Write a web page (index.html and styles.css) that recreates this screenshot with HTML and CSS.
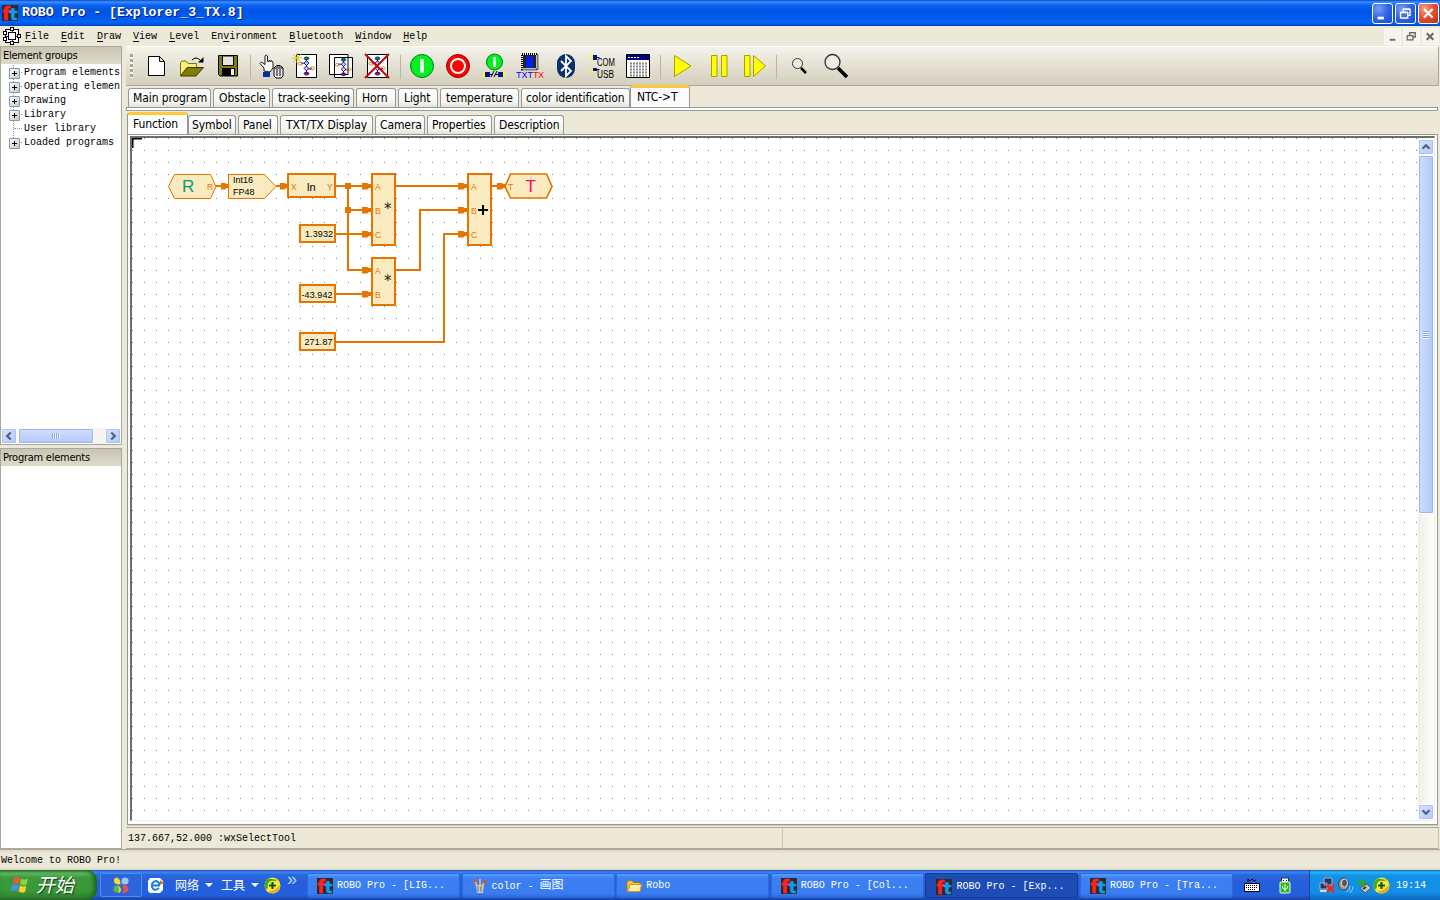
FILE: index.html
```
<!DOCTYPE html>
<html lang="en">
<head>
<meta charset="utf-8">
<title>ROBO Pro</title>
<link rel="stylesheet" href="styles.css">
</head>
<body>
<svg class="defs" width="0" height="0">
  <symbol id="ft" viewBox="0 0 16 16">
    <rect width="16" height="16" fill="#2b2b2b"/>
    <text x=".5" y="14.500" font-family="DejaVu Sans" font-weight="bold" font-size="17" fill="#ff2222" stroke="#ff2222" stroke-width=".6">f</text>
    <text x="8" y="14.500" font-family="DejaVu Sans" font-weight="bold" font-size="15.500" fill="#0c9cf0" stroke="#0c9cf0" stroke-width=".6">t</text>
  </symbol>
  <symbol id="chart" viewBox="0 0 20 22">
    <path d="M10 2V20M4 8H10M10 14H16" stroke="#0000a0" fill="none"/>
    <ellipse cx="10" cy="3" rx="2.5" ry="1.5" fill="#187868" stroke="#004040"/>
    <ellipse cx="3.5" cy="8.500" rx="2.500" ry="1.500" fill="none" stroke="#e87a10"/>
    <ellipse cx="16" cy="13.500" rx="2.500" ry="1.500" fill="none" stroke="#e87a10"/>
    <path d="M10 5.500L12.500 8L10 10.500L7.500 8ZM10 11L12.500 13.500L10 16L7.500 13.500Z" fill="#c8ccff" stroke="#0000a0"/>
    <ellipse cx="10" cy="19" rx="2.500" ry="1.500" fill="#c01020" stroke="#300080"/>
  </symbol>
  <symbol id="arrow" viewBox="0 0 10 8" preserveAspectRatio="none">
    <path d="M0 1H5L7 2H10V6H7L5 7.500H0Z" fill="#e67500"/>
  </symbol>
  <symbol id="shield" viewBox="0 0 17 17">
    <circle cx="8.500" cy="8.500" r="8" fill="#f7e62c"/>
    <path d="M2 13A8 8 0 0 1 5 1.500Q11 3 14 2.500Q6 6 2 13Z" fill="#3aa82a"/>
    <path d="M4 15Q12 13 16 8Q16 16 9 16.500Z" fill="#e8a820"/>
    <circle cx="8.500" cy="8.500" r="4.800" fill="#ffec40"/>
    <path d="M8.500 5V12M5 8.500H12" stroke="#20500a" stroke-width="2.200"/>
  </symbol>
</svg>

<header class="titlebar">
  <svg class="app-icon" width="16" height="16"><use href="#ft"/></svg>
  <span class="title">ROBO Pro - [Explorer_3_TX.8]</span>
  <div class="winbtns">
    <span class="winbtn"><svg viewBox="0 0 21 21"><path d="M5 15.500H12" stroke="#fff" stroke-width="3"/></svg></span>
    <span class="winbtn"><svg viewBox="0 0 21 21"><path d="M5 9.500H13V15.500H5ZM8 9V6H15.500V12.500H13M5 9H13M8 5.500H15.500" stroke="#fff" stroke-width="1.500" fill="none"/></svg></span>
    <span class="winbtn close"><svg viewBox="0 0 21 21"><path d="M5.500 5.500L15 15M15 5.500L5.500 15" stroke="#fff" stroke-width="2.300"/></svg></span>
  </div>
</header>

<nav class="menubar">
  <svg class="doc-icon" width="18" height="18" viewBox="0 0 18 18" shape-rendering="crispEdges">
    <path d="M2.500 2.500H15.500V15.500H2.500Z" fill="#fff" stroke="#000"/>
    <path d="M5.500 5.500H12.500V12.500H5.500Z" fill="#fff" stroke="#000"/>
    <path d="M9 3V6M9 12V15" stroke="#c00000"/><path d="M3 9H6M12 9H15" stroke="#0000c0"/>
    <path d="M7.500 .5H10.500V3.500H7.500ZM7.500 14.500H10.500V17H7.500ZM.5 4.500H3.500V7.500H.5ZM.5 10.500H3.500V13.500H.5ZM14.500 7.500H17V10.500H14.500Z" fill="#fff" stroke="#000"/>
  </svg>
  <span><u>F</u>ile</span><span><u>E</u>dit</span><span><u>D</u>raw</span><span><u>V</u>iew</span><span><u>L</u>evel</span><span>En<u>v</u>ironment</span><span><u>B</u>luetooth</span><span><u>W</u>indow</span><span><u>H</u>elp</span>
  <div class="mdibtns">
    <span><svg viewBox="0 0 16 16"><path d="M5 11.500H11" stroke="#6b6a60" stroke-width="2"/></svg></span>
    <span><svg viewBox="0 0 16 16"><path d="M3.500 7H9.500V11.500H3.500ZM6 6.500V4H12V8.500H10" stroke="#6b6a60" stroke-width="1.400" fill="none"/></svg></span>
    <span><svg viewBox="0 0 16 16"><path d="M4 4.500L11 11.500M11 4.500L4 11.500" stroke="#6b6a60" stroke-width="2.200"/></svg></span>
  </div>
</nav>

<main class="workspace">
  <aside class="side">
    <section class="panel groups">
      <h2>Element groups</h2>
      <ul class="tree">
        <li><i class="plus"></i>Program elements</li>
        <li><i class="plus"></i>Operating elemen</li>
        <li><i class="plus"></i>Drawing</li>
        <li><i class="plus"></i>Library</li>
        <li><i class="leaf"></i>User library</li>
        <li><i class="plus"></i>Loaded programs</li>
      </ul>
      <div class="hscroll">
        <span class="sbtn"><svg viewBox="0 0 16 16"><path d="M10 4L6 8L10 12" stroke="#4d6185" stroke-width="2.600" fill="none"/></svg></span>
        <span class="thumb"><b></b></span>
        <span class="sbtn end"><svg viewBox="0 0 16 16"><path d="M6 4L10 8L6 12" stroke="#4d6185" stroke-width="2.600" fill="none"/></svg></span>
      </div>
    </section>
    <section class="panel elements"><h2>Program elements</h2></section>
  </aside>

  <div class="content">
    <div class="toolbar">
      <span class="grip"></span>
      <svg viewBox="138 46 36 40"><path d="M148.500 56.500H159.500L164.500 61.500V75.500H148.500ZM159.500 56.500V61.500H164.500" fill="#fff" stroke="#000"/></svg>
      <svg viewBox="174 46 36 40"><path d="M180.500 75V62.500L182 61H186L188 63.500H196.500V67" fill="#f8ee78" stroke="#77760a"/><path d="M180.500 76L187 67.500H203.500L196 76Z" fill="#807c08" stroke="#3c3a00"/><path d="M192 60Q196 56 200 60" fill="none" stroke="#000"/><path d="M203.500 57V62.500H198Z"/></svg>
      <svg viewBox="210 46 36 40"><path d="M218.500 55.500H237.500V76H220L218.500 74.500Z" fill="#807c08" stroke="#000"/><path d="M222.500 56H233.500V65.500H222.500Z" fill="#e8e6da" stroke="#000"/><path d="M222 68H235V76H222Z" fill="#000"/><path d="M231 69H234V75H231Z" fill="#eee"/></svg>
      <i class="sep narrow"></i>
      <svg viewBox="252 46 36 40"><path d="M264 71V68L260 63.500L261.500 62L265 64.500V56Q266 54 267.500 56V61.500H269V60.500L271 61.500V60.500L273 62V68L270 72Z" fill="#fff" stroke="#000" stroke-width=".9"/><path d="M263 72H270V77H263Z" fill="#0030a0"/><path d="M274 68V76L276 78H281L283 76V68L281 66H276Z" fill="#eee" stroke="#000"/><path d="M274 68H283M277 69V76M280 69V76M277 65.500H280" stroke="#000"/></svg>
      <svg viewBox="288 46 36 40"><path d="M296.500 54.500H316.500V77.500H296.500Z" fill="#fff" stroke="#000"/><use href="#chart" x="297" y="55" width="19" height="22"/><path d="M297 53V63M292 58H302M293.500 54.500L300.500 61.500M300.500 54.500L293.500 61.500" stroke="#c8c020"/></svg>
      <svg viewBox="324 46 36 40"><path d="M329.500 54.500H348V74.500H329.500ZM334.500 57.500H352.500V77.500H334.500Z" fill="#fff" stroke="#000"/><use href="#chart" x="334" y="57" width="19" height="20"/></svg>
      <svg viewBox="360 46 36 40"><path d="M367.500 54.500H387.500V77.500H367.500Z" fill="#fff" stroke="#000"/><use href="#chart" x="368" y="55" width="19" height="22"/><path d="M365 54L389 78M389 54L365 78" stroke="#c80808" stroke-width="2"/></svg>
      <i class="sep"></i>
      <svg viewBox="404 46 36 40"><circle cx="422" cy="66" r="11.500" fill="#00f020" stroke="#008010"/><path d="M422 59V73" stroke="#fff" stroke-width="3.500"/></svg>
      <svg viewBox="440 46 36 40"><circle cx="458" cy="66" r="11.500" fill="#f00" stroke="#900"/><circle cx="458" cy="66" r="7" fill="#f00" stroke="#fff" stroke-width="2"/></svg>
      <svg viewBox="476 46 36 40"><circle cx="494.500" cy="62" r="8" fill="#00f020" stroke="#008010"/><path d="M494.500 57V67" stroke="#fff" stroke-width="2.500"/><path d="M483 72H485V77H483ZM503 72H505V77H503Z" fill="#ff0"/><path d="M485 72H490V77H485ZM498 72H503V77H498Z" fill="#0010a0"/><path d="M489 74.500H493M495 74.500H499M491 77L494 71M494 77L497 71" stroke="#000"/></svg>
      <svg viewBox="512 46 36 40"><path d="M522 54H537.500V69.500H522Z" fill="#fff" stroke="#000" stroke-width="2" stroke-dasharray="1 1"/><path d="M523 55H536V68H523Z" fill="#222"/><path d="M526 56H533V68H526Z" fill="#0020f0"/><text x="516" y="78" class="tx" fill="#00f" textLength="17">TXT</text><text x="533" y="78" class="tx" fill="#f00" textLength="11">TX</text></svg>
      <svg viewBox="548 46 36 40"><rect x="557" y="54" width="18" height="24" rx="9" fill="#0b316c"/><path d="M561 61L571 71L566 76V56L571 61L561 71" fill="none" stroke="#fff" stroke-width="1.800"/></svg>
      <svg viewBox="584 46 36 40"><path d="M591 55H594V60H591ZM591 68H594V72H591Z" fill="#ff0"/><path d="M593 55H597V60H593ZM593 68H597V71H593Z" fill="#0010a0"/><path d="M597 57.500H599.500M597 69.500H599.500" fill="none" stroke="#0010a0"/><text x="597" y="66" class="com" textLength="18" lengthAdjust="spacingAndGlyphs">COM</text><text x="597" y="78" class="com" textLength="17" lengthAdjust="spacingAndGlyphs">USB</text></svg>
      <svg viewBox="620 46 36 40"><path d="M626.500 54.500H649.500V77.500H626.500Z" fill="#fff" stroke="#000"/><path d="M627 55H649V60H627Z" fill="#000080"/><path d="M628 57.500H639" stroke="#fff" stroke-dasharray="2 1"/><path d="M630 63.500H647M630 66.500H647M630 69.500H647M630 72.500H647M630 75.500H647" stroke="#888" stroke-width="2" stroke-dasharray="2 1"/></svg>
      <i class="sep"></i>
      <svg viewBox="664 46 36 40"><path d="M674.500 55.500L691 66L674.500 76.500Z" fill="#ff0" stroke="#a8a000"/></svg>
      <svg viewBox="700 46 36 40"><path d="M711.500 55.500H717V76.500H711.500ZM721.500 55.500H727V76.500H721.500Z" fill="#ff0" stroke="#a8a000"/></svg>
      <svg viewBox="736 46 36 40"><path d="M744.500 55.500H750V76.500H744.500ZM753.500 55.500L765.500 66L753.500 76.500Z" fill="#ff0" stroke="#a8a000"/></svg>
      <i class="sep wide"></i>
      <svg viewBox="781 46 36 40"><circle cx="797.500" cy="63.500" r="5" fill="#eeece4" stroke="#333"/><path d="M801 68L806 73" stroke="#000" stroke-width="2.500"/></svg>
      <svg viewBox="817 46 36 40"><circle cx="832.500" cy="62" r="7.500" fill="#eeece4" stroke="#333" stroke-width="1.300"/><path d="M838 68L847 77" stroke="#000" stroke-width="3.500"/></svg>
    </div>

    <div class="tabs first">
      <span class="tab t1">Main program</span><span class="tab t2">Obstacle</span><span class="tab t3">track-seeking</span><span class="tab t4">Horn</span><span class="tab t5">Light</span><span class="tab t6">temperature</span><span class="tab t7">color identification</span><span class="tab t8 on">NTC-&gt;T</span>
    </div>
    <div class="strip"></div>
    <div class="tabs second">
      <span class="tab s1 on">Function</span><span class="tab s2">Symbol</span><span class="tab s3">Panel</span><span class="tab s4">TXT/TX Display</span><span class="tab s5">Camera</span><span class="tab s6">Properties</span><span class="tab s7">Description</span>
    </div>

    <div class="page">
      <div class="view">
        <svg class="diagram" viewBox="132 138 1286 682" width="1286" height="682">
          <defs><pattern id="dots" x="0" y="6" width="12" height="12" patternUnits="userSpaceOnUse"><rect width="1" height="1" fill="#808080"/></pattern></defs>
          <rect x="132" y="138" width="1286" height="682" fill="url(#dots)"/>
          <path d="M132 148V138H142" fill="none" stroke="#000" stroke-width="3"/>
          <g fill="none" stroke="#e67500" stroke-width="2" shape-rendering="crispEdges">
            <path d="M216 186H222M276 186H282M336 186H372M336 234H372M336 294H372M348 186V270H372M348 210H372"/>
            <path d="M396 186H468M396 270H420V210H468M336 342H444V234H468M492 186H500"/>
          </g>
          <g fill="#e67500"><rect x="345" y="183" width="6" height="6"/><rect x="345" y="207" width="6" height="6"/></g>
          <g>
            <use href="#arrow" x="221" y="182" width="8" height="8"/>
            <use href="#arrow" x="280" y="182" width="9" height="8"/>
            <use href="#arrow" x="362" y="182" width="10" height="8"/><use href="#arrow" x="362" y="206" width="10" height="8"/><use href="#arrow" x="362" y="230" width="10" height="8"/><use href="#arrow" x="362" y="266" width="10" height="8"/><use href="#arrow" x="362" y="290" width="10" height="8"/>
            <use href="#arrow" x="458" y="182" width="10" height="8"/><use href="#arrow" x="458" y="206" width="10" height="8"/><use href="#arrow" x="458" y="230" width="10" height="8"/>
            <use href="#arrow" x="497" y="182" width="9" height="8"/>
          </g>
          <g fill="#f9ebbf" stroke="#e67500">
            <path d="M168.500 186.500L174.500 174.500H210.500L216 186.500L210.500 198.500H174.500Z"/>
            <path d="M228.500 174.500H264.500L276 186.500L264.500 198.500H228.500Z"/>
            <path d="M505 186.500L510.500 174H546.500L552 186.500L546.500 198H510.500Z" stroke-width="1.700"/>
            <g stroke-width="2">
              <rect x="288" y="174" width="47" height="23"/>
              <rect x="372" y="174" width="23" height="71"/>
              <rect x="372" y="258" width="23" height="47"/>
              <rect x="468" y="174" width="23" height="71"/>
              <rect x="300" y="225" width="35" height="17"/>
              <rect x="300" y="285" width="35" height="17"/>
              <rect x="300" y="333" width="35" height="17"/>
            </g>
          </g>
          <g class="port">
            <text x="207" y="190">R</text><text x="291" y="190">X</text><text x="327" y="190">Y</text>
            <text x="375" y="190">A</text><text x="375" y="214">B</text><text x="375" y="238">C</text>
            <text x="375" y="274">A</text><text x="375" y="298">B</text>
            <text x="471" y="190">A</text><text x="471" y="214">B</text><text x="471" y="238">C</text>
            <text x="508" y="190">T</text>
          </g>
          <text class="big" x="182" y="192" fill="#0a9a70">R</text>
          <text class="big" x="525.500" y="192" fill="#ff0a6c">T</text>
          <g class="val">
            <text x="233" y="183">Int16</text><text x="233" y="195">FP48</text>
            <text x="307" y="191" class="fn">ln</text>
            <text x="305" y="237" textLength="28">1.3932</text>
            <text x="301.500" y="298" textLength="31">-43.942</text>
            <text x="304.500" y="345" textLength="28">271.87</text>
          </g>
          <text class="star" x="384" y="214">*</text><text class="star" x="384" y="286">*</text>
          <path d="M478 210H488M483 205V215" stroke="#000" stroke-width="2"/>
        </svg>
        <div class="vscroll">
          <span class="sbtn"><svg viewBox="0 0 16 16"><path d="M4 10L8 6L12 10" stroke="#4d6185" stroke-width="2.600" fill="none"/></svg></span>
          <span class="thumb"><b></b></span>
          <span class="sbtn end"><svg viewBox="0 0 16 16"><path d="M4 6L8 10L12 6" stroke="#4d6185" stroke-width="2.600" fill="none"/></svg></span>
        </div>
      </div>
    </div>
    <div class="coords"><span>137.667,52.000 :wxSelectTool</span><span></span></div>
  </div>
</main>

<div class="statusbar">Welcome to ROBO Pro!</div>

<footer class="taskbar">
  <div class="start">
    <svg width="20" height="20" viewBox="0 0 20 20"><path d="M4 3Q7 1 10 3L9 9Q6 7 2.500 9Z" fill="#f0582a"/><path d="M11 3.500Q14 5.500 18 3.500L16.500 9.500Q13 11 10 9Z" fill="#8cd43c"/><path d="M2.300 10Q6 8.500 8.800 10.300L7.500 16Q5 14.500 1 16Z" fill="#4a90f4"/><path d="M10 10.300Q13 12.500 16.300 10.800L15 17Q12 18.500 8.700 16.500Z" fill="#fcd430"/></svg>
    <span>开始</span>
  </div>
  <div class="quick"><svg width="18" height="18" viewBox="0 0 18 18"><path d="M8.500 8.500Q1 9 2 3Q5 0 7 3Q9 5 8.500 8.500Z" fill="#f4dc28"/><circle cx="13" cy="5" r="3.600" fill="#9cc8f8"/><circle cx="5" cy="13" r="3.600" fill="#58b848"/><path d="M5 9.500Q8 10 9 13Q9 17 6 17Q9 13 5 9.500Z" fill="#f4dc28"/><path d="M9.500 9.500Q17 8 16.500 14Q14 18 10 16.500Q14 13 9.500 9.500Z" fill="#f05040"/></svg></div>
  <div class="links">
    <svg width="17" height="17" viewBox="0 0 17 17"><path d="M3 1H13L16 4V13L13 16H3L1 14V4Z" fill="#fff"/><path d="M12 11Q7 15 5 10Q4 5 9 4Q13 5 12 8.500H5" fill="none" stroke="#1480d8" stroke-width="2"/><path d="M13 3L17 6L13 8Z" fill="#e86818"/></svg>
    <span class="l1">网络</span><i></i><span class="l2">工具</span><i></i>
    <svg width="17" height="17"><use href="#shield"/></svg>
    <em>»</em>
  </div>
  <div class="tasks">
    <div class="task"><svg width="16" height="16"><use href="#ft"/></svg>ROBO Pro - [LIG...</div>
    <div class="task"><svg width="16" height="16" viewBox="0 0 16 16"><path d="M5 8L2 1M8 8V1M10 8L14 2" stroke="#e0a868" stroke-width="2"/><path d="M2 1L3 4M14 2L12 5" stroke="#e03c20" stroke-width="2"/><path d="M4 7H12L11 15H5Z" fill="#c8ccc8"/><path d="M6 8V14M9 8V14" stroke="#70785c"/></svg><span>color - <span class="cjk">画图</span></span></div>
    <div class="task"><svg width="16" height="16" viewBox="0 0 16 16"><path d="M1 4L2.500 2.500H6L7.500 4.500H14V13.500H1Z" fill="#f0c850" stroke="#a87818"/><path d="M2 13.500L4 6.500H15.500L14 13.500Z" fill="#fff09c" stroke="#c89830"/></svg>Robo</div>
    <div class="task"><svg width="16" height="16"><use href="#ft"/></svg>ROBO Pro - [Col...</div>
    <div class="task active"><svg width="16" height="16"><use href="#ft"/></svg>ROBO Pro - [Exp...</div>
    <div class="task"><svg width="16" height="16"><use href="#ft"/></svg>ROBO Pro - [Tra...</div>
  </div>
  <div class="devices">
    <svg width="16" height="16" viewBox="0 0 16 16"><path d="M4 5V2L6 4L8 2L10 4L12 3" stroke="#000" fill="none"/><path d="M.5 6.500H15.500V14.500H.5Z" fill="#fff" stroke="#000"/><path d="M2 8.500H14M2 10.500H14M4 12.500H12" stroke="#000" stroke-dasharray="1 1"/></svg>
    <svg width="12" height="17" viewBox="0 0 12 17"><path d="M2.500 1H9.500V6H2.500Z" fill="#fff" stroke="#333"/><path d="M4 3H5V4H4ZM7 3H8V4H7Z"/><rect x="1" y="5" width="10" height="11" rx="1" fill="#34b81c" stroke="#dfe"/><path d="M6 14V7M3.500 9V11L6 12.500L8.500 11V9" stroke="#fff" fill="none"/></svg>
  </div>
  <div class="tray">
    <svg width="17" height="17" viewBox="0 0 17 17"><path d="M5 1H13V8H5ZM1 6H8V12H1Z" fill="#283464" stroke="#a8b0c8"/><path d="M1 14H9" stroke="#d8dce8" stroke-width="2"/><path d="M8 8L15 15M15 8L8 15" stroke="#f02820" stroke-width="2.500"/></svg>
    <svg width="17" height="17" viewBox="0 0 17 17"><ellipse cx="6.500" cy="7" rx="5" ry="6" fill="#999" stroke="#444"/><ellipse cx="7.500" cy="6" rx="3" ry="4" fill="#555" stroke="#ddd"/><path d="M10 15Q13 13 13 9M13 16Q16 13 16 9" stroke="#9cccff" fill="none"/></svg>
    <svg width="17" height="17" viewBox="0 0 17 17"><path d="M2 5L5 1L6 3L12 4L9 9L5 8Z" fill="#28a838"/><path d="M5 11L12 7L16 11L10 16Z" fill="#c0c4c0" stroke="#555"/><path d="M8 12L11 10" stroke="#333" stroke-width="2"/></svg>
    <svg width="17" height="17"><use href="#shield"/></svg>
    <time>19:14</time>
  </div>
</footer>
</body>
</html>
```
FILE: styles.css
```
* { box-sizing: border-box; }
body {
  margin: 0; width: 1440px; height: 900px; overflow: hidden;
  display: grid; grid-template-rows: 26px 20px 803px 21px 30px;
  background: #ece9d8; color: #000;
  font: 10px/14px "Liberation Mono", "Noto Sans CJK SC", monospace;
  white-space: nowrap;
}
svg { display: block; flex: none; }
.defs { position: absolute; }

.titlebar {
  display: flex; align-items: center; padding: 0 1px 0 2px;
  background: linear-gradient(#0a48d0 0, #3a90ff 2px, #0a64f0 5px, #0054e3 10px, #0058ea 17px, #0066fa 22px, #0050d8 25px, #0040b0 26px);
}
.title {
  margin-left: 4px; flex: 1; color: #fff;
  font: bold 13.200px/20px "Liberation Mono", monospace;
  text-shadow: 1px 1px 0 #0a1883;
}
.winbtns { display: flex; gap: 2px; }
.winbtn {
  width: 21px; height: 21px; border: 1px solid #fff; border-radius: 3px;
  background: radial-gradient(circle at 30% 25%, #7a9cf4, #3064e4 50%, #1c4cd0);
}
.winbtn.close { background: radial-gradient(circle at 30% 25%, #f0a088, #e0502c 50%, #c03010); }

.menubar { display: flex; align-items: center; padding-left: 3px; gap: 12px; font-size: 10px; line-height: 16px; background: #ece9d8; }
.menubar > span { padding-top: 1px; }
.doc-icon { margin-right: -8px; }
.menubar u { text-decoration: underline; text-underline-offset: 2px; }
.mdibtns { margin-left: auto; display: flex; gap: 2px; padding-right: 1px; }
.mdibtns span { width: 17px; height: 17px; background: #f4f3ec; border: 1px solid #faf9f4; }

.workspace { display: grid; grid-template-columns: 122px 1fr; column-gap: 4px; min-height: 0; }
.side { display: grid; grid-template-rows: 399px 401px; row-gap: 3px; }
.panel { border: 1px solid #aca899; background: #fff; display: flex; flex-direction: column; overflow: hidden; }
.panel h2 {
  margin: 0; height: 17px; padding-left: 2px; flex: none;
  background: linear-gradient(#c8c5b4, #dedbcb);
  font: 11px/17px "DejaVu Sans Condensed", "DejaVu Sans", sans-serif; letter-spacing: -.25px;
}
.tree { list-style: none; margin: 0; padding: 1px 0 0 7px; flex: 1; overflow: hidden; }
.tree li { height: 14px; line-height: 15px; display: flex; align-items: center; }
.tree i { width: 16px; height: 14px; flex: none; background: repeating-linear-gradient(#999 0 1px, transparent 1px 2px) 5px 0 / 1px 100% no-repeat; position: relative; }
.tree i::after { content: ""; position: absolute; left: 6px; top: 7px; width: 8px; border-top: 1px dotted #999; }
.tree .plus::before {
  content: ""; position: absolute; z-index: 1; left: 1px; top: 3px; width: 9px; height: 9px; border: 1px solid #7b9ab8; border-radius: 1px;
  background: linear-gradient(#000, #000) center / 5px 1px no-repeat, linear-gradient(#000, #000) center / 1px 5px no-repeat, linear-gradient(135deg, #fff, #ccc6b8);
}
.hscroll { height: 16px; display: flex; background: #f5f4ee; }
.sbtn, .thumb {
  border: 1px solid #fff; border-radius: 2px; box-shadow: inset 0 0 0 1px #adc2f4;
  background: linear-gradient(135deg, #d8e4ff, #b4c8f8); flex: none;
}
.sbtn { width: 16px; height: 16px; }
.sbtn svg { width: 14px; height: 14px; }
.hscroll .thumb { width: 76px; height: 16px; margin-left: 1px; display: grid; place-items: center; background: linear-gradient(#d0deff, #b4c8f8); box-shadow: inset 0 0 0 1px #9ab4ec; }
.hscroll .thumb b { width: 8px; height: 6px; background: repeating-linear-gradient(90deg, #8ca8e4 0 1px, #eef4fe 1px 2px); }
.hscroll .end { margin-left: auto; }

.content { display: grid; grid-template-rows: 40px 21px 4px 23px 691px 24px; min-width: 0; }
.toolbar {
  display: flex; border-bottom: 1px solid #aca899; border-right: 1px solid #aca899; border-top: 1px solid #fff;
  background: linear-gradient(#f4f3ec, #e4e1d2 50%, #d2cfbf); height: 40px; margin-right: 1px; overflow: hidden;
}
.toolbar svg { width: 36px; height: 40px; margin-top: -1px; }
.grip { width: 3px; height: 24px; margin: 7px 5px 0 4px; background: repeating-linear-gradient(#a8a595 0 3px, #f4f3ec 3px 5px); }
.sep { width: 8px; height: 24px; margin-top: 8px; flex: none; background: linear-gradient(#b8b5a4, #b8b5a4) 4px 0 / 1px 100% no-repeat; }
.sep.narrow { width: 6px; }
.sep.wide { width: 9px; }
.tx { font: 9px "Liberation Sans", sans-serif; }
.com { font: 10px "Liberation Sans", sans-serif; }

.tabs { display: flex; align-items: flex-end; font: 12px/19px "DejaVu Sans Condensed", "DejaVu Sans", sans-serif; letter-spacing: -.1px; }
.tab {
  height: 19px; margin-right: 2px; padding-left: 5px; flex: none;
  border: 1px solid #919b9c; border-bottom: 0; border-radius: 3px 3px 0 0;
  background: linear-gradient(#fff, #f6f5f0 70%, #e4e2d8);
}
.tab.on { height: 22px; padding-left: 6px; background: #fcfcfe; border-top: 3px solid #ffc73c; line-height: 18px; }
.first { padding-left: 2px; }
.t1 { width: 83px; padding-left: 4px; } .t2 { width: 57px; } .t3 { width: 82px; } .t4 { width: 40px; } .t5 { width: 40px; } .t6 { width: 79px; } .t7 { width: 109px; margin-right: 0; padding-left: 4px; } .t8 { width: 60px; }
.strip { margin-right: 2px; border: 1px solid #919b9c; background: #fff; }
.second { padding-left: 1px; }
.s1 { width: 61px; margin-right: 0; } .s2 { width: 48px; } .s3 { width: 40px; } .s4 { width: 93px; } .s5 { width: 50px; } .s6 { width: 65px; } .s7 { width: 70px; }
.second .on { padding-left: 5px; }
.s2 { padding-left: 3px; }
.s3, .s5, .s6, .s7 { padding-left: 4px; }
.s4 { letter-spacing: 0; }

.page { margin: 0 2px 0 1px; border: 1px solid #919b9c; background: #fcfcfe; padding: 1px 2px 3px; box-shadow: 0 1px 0 #d0cdbd; }
.view { display: flex; height: 685px; border: 2px solid #716f64; border-right: 1px solid #f1efe2; border-bottom: 1px solid #f1efe2; background: #fff; }
.diagram { width: 1286px; height: 682px; }
.port { font: 8.500px "Liberation Sans", sans-serif; fill: #e67500; }
.big { font: 17px "Liberation Sans", sans-serif; }
.val { font: 9px "Liberation Sans", sans-serif; }
.fn { font-size: 11px; }
.star { font: 15px "DejaVu Sans", sans-serif; fill: #222; }
.vscroll { width: 16px; display: flex; flex-direction: column; background: linear-gradient(90deg, #f0efe8, #fdfdfb); padding-top: 1px; }
.vscroll .thumb { width: 16px; height: 359px; display: grid; place-items: center; background: linear-gradient(90deg, #d0deff, #b4c8f8); box-shadow: inset 0 0 0 1px #9ab4ec; }
.vscroll .thumb b { width: 6px; height: 8px; background: repeating-linear-gradient(#8ca8e4 0 1px, #eef4fe 1px 2px); }
.vscroll .end { margin-top: auto; }

.coords { display: grid; grid-template-columns: 657px 1fr; margin: 2px 1px 0 0; border-top: 1px solid #aca899; border-bottom: 1px solid #aca899; line-height: 22px; }
.coords span { padding-left: 2px; border-right: 1px solid #c8c5b4; }
.statusbar { padding-left: 1px; line-height: 22px; border-top: 1px solid #aca899; background: linear-gradient(#dedbca, #ece9d8 4px, #ece9d8 17px, #d8d5c4); }

.taskbar {
  display: flex; height: 30px; color: #fff;
  background: linear-gradient(#1f4fc0 0, #3c86f0 2px, #2a66dc 5px, #245edb 14px, #2360de 25px, #1941a5 30px);
}
.start {
  width: 97px; display: flex; align-items: center; padding-left: 10px; gap: 6px; border-radius: 0 10px 10px 0;
  background: linear-gradient(#2f7a2f 0, #62b862 3px, #3c983c 8px, #389a38 20px, #2f7a2f 30px);
  box-shadow: inset -3px 0 4px #1c601c;
}
.start span { font: italic 19px/28px "Noto Sans CJK SC", sans-serif; text-shadow: 1px 1px 1px #103c10; margin-top: -3px; }
.quick { width: 42px; height: 24px; margin: 3px 0 0 3px; border: 1px solid #4f8cf0; border-radius: 2px; background: #2c64dc; display: grid; place-items: center; }
.links { width: 166px; display: flex; align-items: center; padding-left: 5px; font: 12px/28px "Noto Sans CJK SC", sans-serif; }
.links span { margin-left: 7px; }
.links .l1 { margin-left: 11px; }
.links i { border: 4px solid transparent; border-top-color: #fff; border-bottom: 0; margin-left: 6px; }
.links .l2 { margin-left: 8px; }
.links i + svg { margin-left: 5px; }
.links em { font: 18px/18px "Liberation Sans", sans-serif; margin: -13px 0 0 6px; color: #b8d4ff; }
.tasks { display: grid; grid-template-columns: repeat(6, 153px); column-gap: 1.600px; flex: none; padding-top: 3px; width: 927px; margin-left: -1px; }
.task {
  height: 25px; display: flex; align-items: center; gap: 4px; padding: 0 0 0 9px;
  border-radius: 2px; border: 1px solid #2c68dc;
  background: linear-gradient(#5c9cff, #3c80f4 4px, #3a7cf0 20px, #2c68dc);
  font-size: 10px;
}
.task.active { background: #1c4cb4; border-color: #143c94; padding: 2px 0 0 10px; }
.cjk { font: 12px/14px "Noto Sans CJK SC", sans-serif; }
.devices { width: 75px; display: flex; align-items: center; gap: 19px; padding-left: 10px; }
.tray {
  flex: 1; display: flex; align-items: center; gap: 3px; padding-left: 9px; border-left: 1px solid #0c3c9c;
  background: linear-gradient(#0c60b8 0, #28b4f8 2px, #1290e8 6px, #1290e8 22px, #0c68c0 30px);
}
.tray svg { margin-right: -2px; }
.tray time { margin: 2px 0 0 5px; line-height: 28px; }
```
